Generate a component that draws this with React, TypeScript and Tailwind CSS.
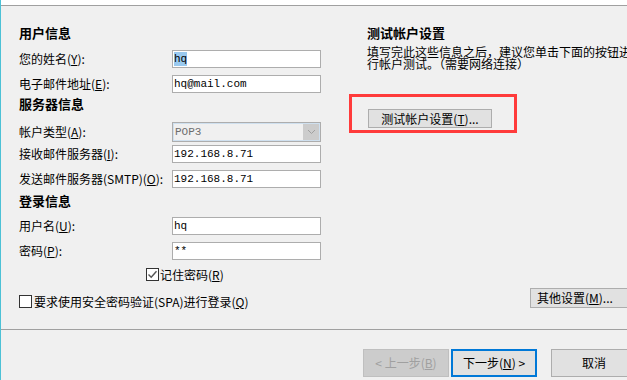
import React from 'react';

const cjk = "font-['Noto_Sans_CJK_SC',sans-serif]";
const mono = "font-['Liberation_Mono','Noto_Sans_CJK_SC',monospace]";

const Key = ({ k }: { k: string }) => <span className="underline underline-offset-1">{k}</span>;

const Heading = ({ children, className = '' }: { children: React.ReactNode; className?: string }) => (
  <div className={`h-[16px] leading-[16px] text-[13px] font-bold text-black ${className}`}>{children}</div>
);

const TextRow = ({
  label,
  value,
  mt,
  selected,
}: {
  label: React.ReactNode;
  value: string;
  mt: string;
  selected?: boolean;
}) => (
  <div className={`flex items-center ${mt}`}>
    <div className="w-[153px] text-[12px] leading-[16px] whitespace-nowrap">{label}</div>
    <div className={`w-[149px] h-[18px] bg-white border border-[#adadad] flex items-center pl-[1px] text-[11px] text-black ${mono}`}>
      {selected ? <span className="bg-[#99c9ef] leading-[14px]">{value}</span> : <span>{value}</span>}
    </div>
  </div>
);

const CheckBox = ({ checked }: { checked?: boolean }) => (
  <div className="w-[13px] h-[13px] border border-[#333333] bg-white flex items-center justify-center shrink-0">
    {checked && (
      <svg width="11" height="11" viewBox="0 0 11 11">
        <path d="M1.5 5.5 L4.2 8.2 L9.5 2.2" fill="none" stroke="#555555" strokeWidth="1.4" />
      </svg>
    )}
  </div>
);

export default function App() {
  return (
    <div className={`w-[627px] h-[380px] overflow-hidden bg-[#f0f0f0] border-l border-[#4cc1d6] flex flex-col text-black ${cjk}`}>
      <div className="h-[6px] shrink-0 bg-white border-b border-[#a0a0a0]" />

      <div className="flex h-[323px] shrink-0">
        {/* left column */}
        <div className="w-[348px] shrink-0 pl-[18px] flex flex-col">
          <Heading className="mt-[19px]">用户信息</Heading>
          <TextRow mt="mt-[9px]" label={<>您的姓名(<Key k="Y" />):</>} value="hq" selected />
          <TextRow mt="mt-[7px]" label={<>电子邮件地址(<Key k="E" />):</>} value="hq@mail.com" />

          <Heading className="mt-[3px]">服务器信息</Heading>
          <div className="flex items-center mt-[10px]">
            <div className="w-[153px] text-[12px] leading-[16px] whitespace-nowrap">
              帐户类型(<Key k="A" />):
            </div>
            <div className="w-[149px] h-[20px] border border-[#adadad] bg-[#f0f0f0] shadow-[inset_0_0_0_1px_#cfe0ef] flex items-center pl-[2px] pr-[1px]">
              <span className={`flex-1 text-[11px] text-[#6d6d6d] ${mono}`}>POP3</span>
              <div className="w-[16px] h-[16px] bg-[#cccccc] flex items-center justify-center">
                <svg width="9" height="6" viewBox="0 0 9 6">
                  <path d="M1 1 L4.5 4.5 L8 1" fill="none" stroke="#a0a0a0" strokeWidth="1" />
                </svg>
              </div>
            </div>
          </div>
          <TextRow mt="mt-[3px]" label={<>接收邮件服务器(<Key k="I" />):</>} value="192.168.8.71" />
          <TextRow mt="mt-[7px]" label={<>发送邮件服务器(SMTP)(<Key k="O" />):</>} value="192.168.8.71" />

          <Heading className="mt-[5px]">登录信息</Heading>
          <TextRow mt="mt-[8px]" label={<>用户名(<Key k="U" />):</>} value="hq" />
          <TextRow mt="mt-[7px]" label={<>密码(<Key k="P" />):</>} value="**" />

          <div className="flex items-center mt-[8px] ml-[127px] gap-[1px]">
            <CheckBox checked />
            <span className="text-[12px] leading-[13px] whitespace-nowrap">
              记住密码(<Key k="R" />)
            </span>
          </div>
          <div className="flex items-center mt-[14px] gap-[2px]">
            <CheckBox />
            <span className="text-[12px] leading-[13px] whitespace-nowrap">
              要求使用安全密码验证(SPA)进行登录(<Key k="Q" />)
            </span>
          </div>
        </div>

        {/* right column */}
        <div className="flex flex-col shrink-0 w-[300px]">
          <Heading className="mt-[19px] ml-[18px]">测试帐户设置</Heading>
          <div className="mt-[5px] ml-[18px] text-[12px] leading-[12px] whitespace-nowrap">
            <div>填写完此这些信息之后，建议您单击下面的按钮进</div>
            <div>行帐户测试。（需要网络连接）</div>
          </div>
          <div className="mt-[24px] w-[168px] h-[39px] border-[3px] border-[#ff3b3b] pl-[16px] pt-[12px]">
            <button className="w-[124px] h-[19px] bg-[#e1e1e1] border border-[#adadad] text-[12px] leading-[16px] flex items-center justify-center whitespace-nowrap">
              测试帐户设置(<Key k="T" />)...
            </button>
          </div>
          <button className="mt-[155px] ml-[181px] w-[100px] h-[20px] bg-[#e1e1e1] border border-[#adadad] text-[12px] leading-[16px] flex items-center pl-[6px] whitespace-nowrap">
            其他设置(<Key k="M" />)...
          </button>
        </div>
      </div>

      <div className="h-[1px] shrink-0 bg-[#a0a0a0]" />

      <div className="flex items-start pt-[19px] pl-[362px] gap-[2px]">
        <button className="w-[86px] h-[28px] shrink-0 bg-[#cccccc] border border-[#bfbfbf] text-[12px] text-[#a0a0a0] flex items-center justify-center whitespace-nowrap">
          &lt; 上一步(<Key k="B" />)
        </button>
        <button className="w-[86px] h-[28px] shrink-0 bg-[#e1e1e1] border-2 border-[#0078d7] text-[12px] flex items-center justify-center whitespace-nowrap">
          下一步(<Key k="N" />) &gt;
        </button>
        <button className="ml-[12px] w-[86px] h-[28px] shrink-0 bg-[#e1e1e1] border border-[#adadad] text-[12px] flex items-center justify-center">
          取消
        </button>
      </div>
    </div>
  );
}
